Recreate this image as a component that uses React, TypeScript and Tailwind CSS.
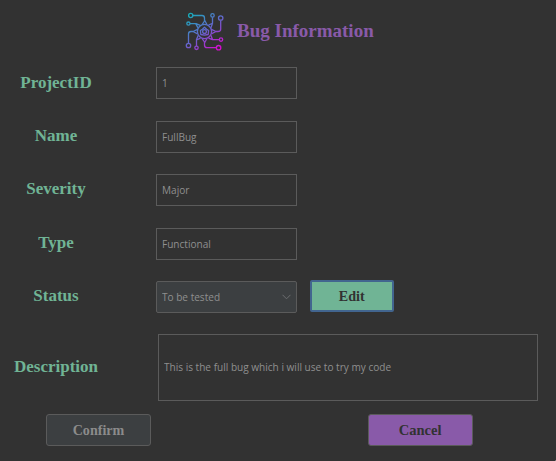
import React from "react";

const labelClass =
  "w-[112px] shrink-0 whitespace-nowrap text-center font-['Liberation_Serif',serif] text-[17px] font-bold text-[#70b495]";
const valueClass =
  "origin-left scale-x-[0.875] whitespace-nowrap font-['Open_Sans',sans-serif] text-[11.5px] text-[#8f8f8f]";

function Logo() {
  return (
    <svg width="50" height="50" viewBox="0 0 50 50" fill="none" stroke="url(#circuit)" strokeWidth="1.3" strokeLinejoin="round">
      <defs>
        <linearGradient id="circuit" gradientUnits="userSpaceOnUse" x1="11" y1="8" x2="38" y2="44">
          <stop offset="0" stopColor="#17adba" />
          <stop offset="0.5" stopColor="#6367cc" />
          <stop offset="1" stopColor="#d70bce" />
        </linearGradient>
      </defs>
      <circle cx="10.7" cy="10.5" r="2.1" />
      <circle cx="8.4" cy="18.6" r="1.6" />
      <circle cx="8.5" cy="40.5" r="2.2" />
      <circle cx="16.5" cy="42.8" r="1.7" />
      <circle cx="32.5" cy="10.4" r="1.7" />
      <circle cx="40.7" cy="13" r="2.2" />
      <circle cx="41" cy="34.6" r="1.7" />
      <circle cx="38.6" cy="42.7" r="2.2" />
      <path d="M13 10.5H22Q24.5 10.5 24.5 13V16L22.3 19.3M24.5 15L26.8 19.3" />
      <path d="M10 18.6H16L20.3 20.3M15.7 18.6L18 22.9" />
      <path d="M8.5 38V29Q8.5 26.5 11 26.5H13L17.6 24.4M13 26.5L17.6 28.8" />
      <path d="M16.5 41V34.6L18.3 30.3M16.5 35L20.5 33.2" />
      <path d="M32.5 12.3V18.4L28.5 20M32.5 18.4L31 22.7" />
      <path d="M40.7 15.4V24Q40.7 26.5 38 26.5H36L31.4 24.4M36 26.5L31.4 28.8" />
      <path d="M39.2 34.6H32.5L30.9 30.3M32.5 34.6L28.5 33.1" />
      <path d="M36.2 42.7H27Q24.5 42.7 24.5 40V37L22.3 33.8M24.5 38L26.8 33.8" />
      <circle cx="24.5" cy="26.5" r="7.1" />
      <path d="M24.5 22.2L26.6 24.2L28.6 25.5L28.2 29.5L24.5 30.2L20.8 29.5L20.4 25.5L22.4 24.2Z" strokeWidth="1.3" />
      <circle cx="24.5" cy="26.6" r="1.9" />
    </svg>
  );
}

function Field({ label, value, leading = "leading-8" }: { label: string; value: string; leading?: string }) {
  return (
    <div className="flex h-8">
      <div className={`${labelClass} ${leading}`}>{label}</div>
      <div className="ml-11 flex h-8 w-[141px] items-center border border-[#5b5b5b] px-[5px]">
        <span className={valueClass}>{value}</span>
      </div>
    </div>
  );
}

export default function App() {
  return (
    <main className="relative h-[461px] w-[556px] overflow-hidden bg-[#323232]">
      <header className="flex h-[67px] pt-[5px] pl-[180px]">
        <Logo />
        <h1 className="ml-[7px] whitespace-nowrap pt-[10px] font-['Liberation_Serif',serif] text-[19px] leading-8 font-bold text-[#895aa9]">
          Bug Information
        </h1>
      </header>
      <div className="grid grid-rows-[54px_53px_54px_53px_53px]">
        <Field label="ProjectID" value="1" />
        <Field label="Name" value="FullBug" leading="leading-[30px]" />
        <Field label="Severity" value="Major" leading="leading-[30px]" />
        <Field label="Type" value="Functional" leading="leading-[30px]" />
        <div className="flex h-8">
          <div className={`${labelClass} leading-[30px]`}>Status</div>
          <div className="ml-11 flex h-8 w-[141px] items-center justify-between rounded-xs border border-[#5b5b5b] bg-[#3c3f41] px-[5px]">
            <span className={valueClass}>To be tested</span>
            <svg width="9" height="6" viewBox="0 0 9 6" fill="none" stroke="#6c6e70">
              <path d="M.5 .8L4.5 4.8L8.5 .8" />
            </svg>
          </div>
          <button className="-mt-px ml-[13px] h-8 w-[84px] rounded-xs border-2 border-[#42658f] bg-[#70b495] font-['Liberation_Serif',serif] text-[15px] font-bold text-[#323232]">
            <span className="inline-block scale-x-[0.94]">Edit</span>
          </button>
        </div>
      </div>
      <div className="flex h-[67px]">
        <div className={`${labelClass} pt-[17px] leading-8`}>Description</div>
        <div className="ml-[46px] flex h-[67px] w-[380px] items-center border border-[#5b5b5b] px-[5px] pb-px">
          <span className={valueClass}>This is the full bug which i will use to try my code</span>
        </div>
      </div>
      <footer className="mt-[13px] flex gap-[217px] pl-[46px] font-['Liberation_Serif',serif] text-[15px] font-bold">
        <button className="h-8 w-[105px] rounded-[3px] border border-[#5b5b5b] bg-[#3c3f41] pt-px text-[#8b8b8b]">
          <span className="inline-block scale-x-[0.94]">Confirm</span>
        </button>
        <button className="h-8 w-[105px] rounded-[3px] border border-[#5b5b5b] bg-[#895aa9] pt-px text-[#323232]">
          <span className="inline-block scale-x-[0.97]">Cancel</span>
        </button>
      </footer>
      <i className="absolute right-0 bottom-0 size-px bg-[#777777]" />
    </main>
  );
}
